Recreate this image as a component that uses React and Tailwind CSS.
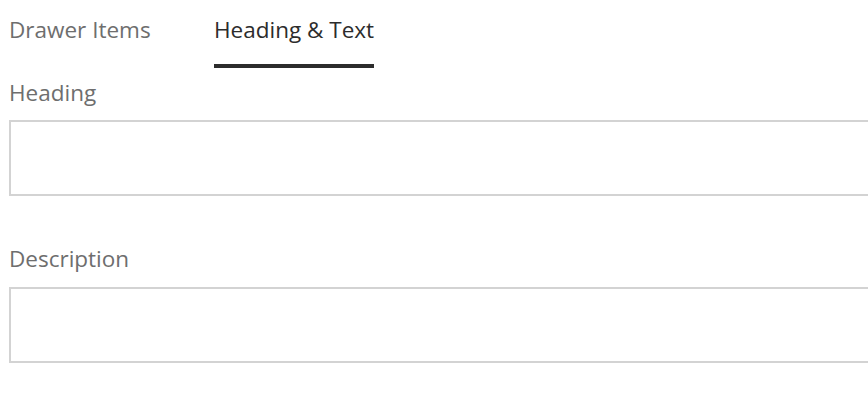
import React from "react";

function App() {
  return (
    <div className="bg-white w-[868px] h-[408px] overflow-hidden font-['Open_Sans',sans-serif] text-[22.5px]">
      <div className="flex pl-[9px] h-[68px]">
        <div className="w-[205px] pt-[13px] text-[#6e6e6e]">Drawer Items</div>
        <div className="flex flex-col justify-between pt-[13px] text-[#2c2c2c]">
          <span>Heading &amp; Text</span>
          <div className="h-[4px] bg-[#2c2c2c]"></div>
        </div>
      </div>
      <div className="pl-[9px]">
        <div className="text-[#6e6e6e] h-[52px] pt-[8px]">Heading</div>
        <div className="h-[76px] border-2 border-r-0 border-[#d3d3d3]"></div>
        <div className="text-[#6e6e6e] h-[91px] pt-[46px]">Description</div>
        <div className="h-[76px] border-2 border-r-0 border-[#d3d3d3]"></div>
      </div>
    </div>
  );
}

export default App;
